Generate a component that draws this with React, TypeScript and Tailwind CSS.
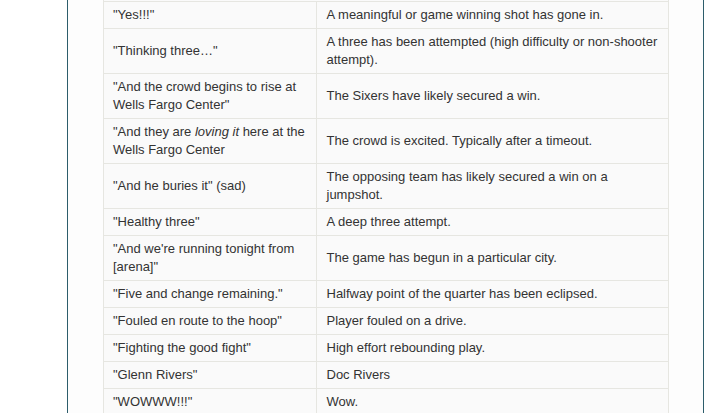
const rows: { phrase: React.ReactNode; meaning: string }[] = [
  { phrase: '"Yes!!!"', meaning: 'A meaningful or game winning shot has gone in.' },
  { phrase: '"Thinking three…"', meaning: 'A three has been attempted (high difficulty or non\u2011shooter attempt).' },
  { phrase: '"And the crowd begins to rise at Wells Fargo Center"', meaning: 'The Sixers have likely secured a win.' },
  {
    phrase: (
      <>
        "And they are <em>loving it</em> here at the Wells Fargo Center
      </>
    ),
    meaning: 'The crowd is excited. Typically after a timeout.',
  },
  { phrase: '"And he buries it" (sad)', meaning: 'The opposing team has likely secured a win on a jumpshot.' },
  { phrase: '"Healthy three"', meaning: 'A deep three attempt.' },
  { phrase: '"And we\'re running tonight from [arena]"', meaning: 'The game has begun in a particular city.' },
  { phrase: '"Five and change remaining."', meaning: 'Halfway point of the quarter has been eclipsed.' },
  { phrase: '"Fouled en route to the hoop"', meaning: 'Player fouled on a drive.' },
  { phrase: '"Fighting the good fight"', meaning: 'High effort rebounding play.' },
  { phrase: '"Glenn Rivers"', meaning: 'Doc Rivers' },
  { phrase: '"WOWWW!!!"', meaning: 'Wow.' },
];

export default function App() {
  return (
    <div className="h-[413px] w-[708px] overflow-hidden bg-white font-['Liberation_Sans',Arial,sans-serif]">
      <div className="ml-[67px] mr-[4px] h-full border-x border-[#2d5d6b] bg-[#fdfdfd] pl-[35px] pr-[34px]">
        <div className="w-[566px] border-x border-[#e6e6e1] bg-[#fafafa] pt-px">
          <table className="w-full table-fixed border-collapse text-[13px] leading-[18px] text-[#333]">
            <colgroup>
              <col className="w-[212px]" />
              <col />
            </colgroup>
            <tbody>
              {rows.map((r, i) => (
                <tr key={i} className="border-t border-[#e6e6e1]">
                  <td className="px-[9px] py-1 align-middle">{r.phrase}</td>
                  <td className="border-l border-[#e6e6e1] pl-[10px] pr-1 py-1 align-middle">{r.meaning}</td>
                </tr>
              ))}
            </tbody>
          </table>
        </div>
      </div>
    </div>
  );
}
